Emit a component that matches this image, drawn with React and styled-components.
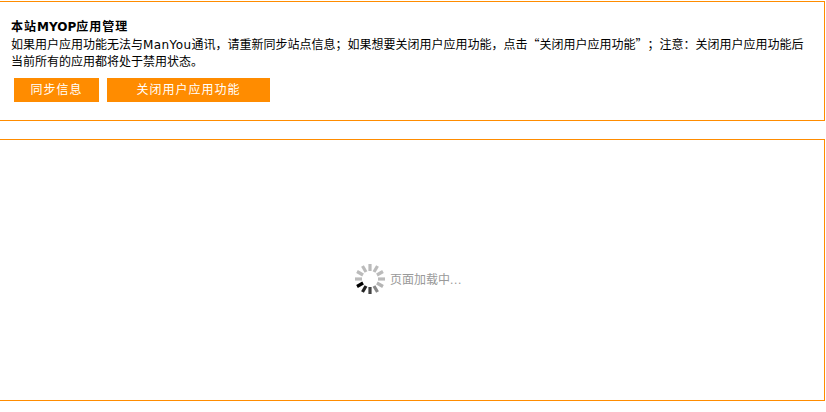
import React from 'react';
import styled, { createGlobalStyle } from 'styled-components';

const Global = createGlobalStyle`
  html, body { margin: 0; padding: 0; background: #fff; }
  body {
    font: 12px/18px "Noto Sans CJK SC", "DejaVu Sans", sans-serif;
    color: #000;
    text-spacing-trim: space-all;
  }
`;
const Page = styled.div`
  width: 826px;
  height: 412px;
  padding-top: 1px;
  box-sizing: border-box;
  overflow: hidden;
`;
const Panel = styled.section`
  width: 825px;
  box-sizing: border-box;
  border: 1px solid #ff8c00;
  border-left-width: 0;
  height: ${p => p.$h}px;
  margin-bottom: 18px;
`;
const Intro = styled.div`
  padding: 15px 11px 0;
`;
const Title = styled.h3`
  margin: 0;
  font-size: 12px;
  line-height: 18px;
  font-weight: bold;
  letter-spacing: 1px;
`;
const Body = styled.p`
  margin: 0;
  width: 800px;
  font-size: 12px;
  line-height: 17px;
`;
const Latin = styled.span`
  font-family: "DejaVu Sans", sans-serif;
  line-height: 0;
  letter-spacing: ${p => p.$spacing || '0'};
`;
const Actions = styled.div`
  display: flex;
  gap: 8px;
  margin: 9px 0 0 3px;
`;
const Btn = styled.button`
  width: ${p => p.$w}px;
  height: 24px;
  padding: 0 0 3px;
  border: 0;
  background: #ff8c00;
  color: #fff;
  font: 12px/20px "Noto Sans CJK SC", sans-serif;
  letter-spacing: 1px;
  text-align: center;
`;
const Loading = styled.div`
  height: 100%;
  box-sizing: border-box;
  padding: 18px 8px 0 0;
  display: flex;
  align-items: center;
  justify-content: center;
  gap: 4px;
  color: #999;
  font-size: 12px;
`;
const Dots = styled.span`
  font-family: "Liberation Sans", sans-serif;
  font-size: 12px;
  line-height: 0;
  letter-spacing: 0.7px;
`;

const shades = ['#000','#222','#444','#888','#b4b4b4','#bbb','#bbb','#bbb','#bbb','#bbb','#bbb','#bbb'];
const Spinner = () => (
  <svg width="32" height="32" viewBox="-16 -16 32 32" aria-hidden="true">
    {shades.map((c, i) => (
      <line key={i} x1="0" y1="-8" x2="0" y2="-15" stroke={c} strokeWidth="3.2"
        transform={`rotate(${240 - i * 30})`} />
    ))}
  </svg>
);

export default function App() {
  return (
    <Page>
      <Global />
      <Panel $h={120}>
        <Intro>
          <Title>本站<Latin>MYOP</Latin>应用管理</Title>
          <Body>如果用户应用功能无法与<Latin $spacing="0.4px">ManYou</Latin>通讯，请重新同步站点信息；如果想要关闭用户应用功能，点击“关闭用户应用功能”；注意：关闭用户应用功能后当前所有的应用都将处于禁用状态。</Body>
          <Actions>
            <Btn $w={85}>同步信息</Btn>
            <Btn $w={163}>关闭用户应用功能</Btn>
          </Actions>
        </Intro>
      </Panel>
      <Panel $h={262}>
        <Loading>
          <Spinner />
          <span>页面加载中<Dots>...</Dots></span>
        </Loading>
      </Panel>
    </Page>
  );
}
